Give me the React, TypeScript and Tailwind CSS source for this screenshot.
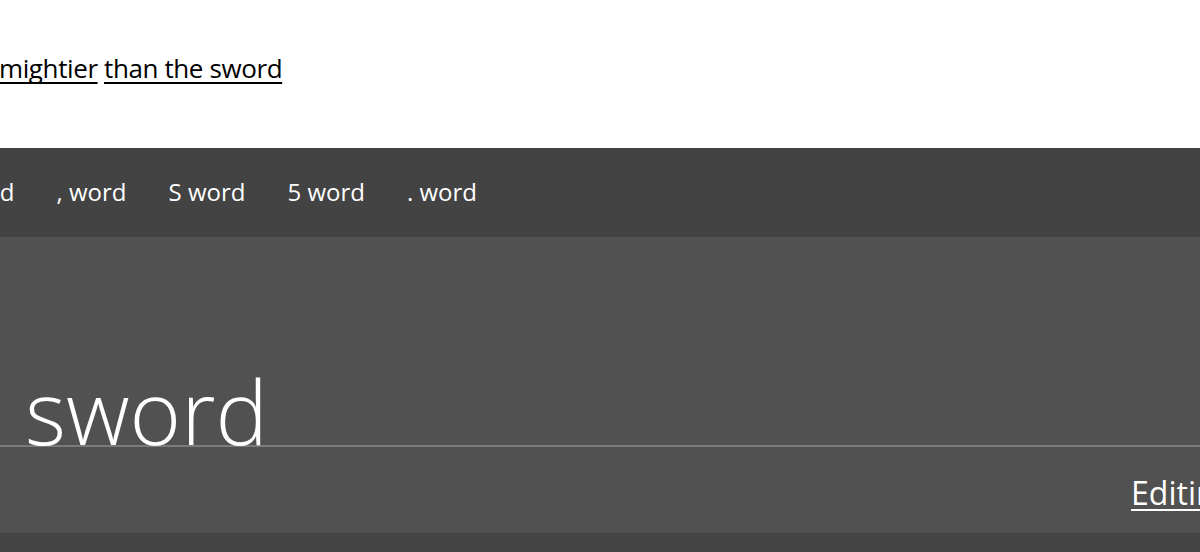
export default function App() {
  const chips = [", word", "S word", "5 word", ". word"];

  return (
    <div className="w-[1200px] h-[552px] overflow-hidden bg-white flex flex-col">
      {/* Sentence line */}
      <div className="h-[148px] overflow-hidden pt-[52px]">
        <p className="ml-[-1px] text-[26px] leading-[32px] text-black whitespace-nowrap font-['Open_Sans',sans-serif] tracking-[-0.015em]">
          <span className="underline underline-offset-[4px] decoration-[2px] [text-decoration-skip-ink:none]">mightier</span>{" "}
          <span className="underline underline-offset-[4px] decoration-[2px] [text-decoration-skip-ink:none]">than the sword</span>
        </p>
      </div>

      {/* Suggestion bar */}
      <div className="h-[89px] bg-[#434343] flex items-center overflow-hidden font-['Open_Sans',sans-serif] text-[24px] text-white whitespace-nowrap">
        <span className="ml-[-43px] -translate-y-[1px]">word</span>
        {chips.map((c) => (
          <span key={c} className="ml-[42px] -translate-y-[1px]">
            {c}
          </span>
        ))}
      </div>

      {/* Editing panel */}
      <div className="h-[296px] bg-[#515151] flex flex-col overflow-hidden">
        <div className="h-[210px] flex items-end border-b-2 border-[#7b7b7b]">
          <span className="ml-[25px] text-[88px] leading-[88px] font-light text-white font-['Open_Sans',sans-serif] translate-y-[10px]">
            sword
          </span>
        </div>
        <div className="flex justify-end pt-[26px] overflow-hidden">
          <span className="mr-[-33px] text-[32px] leading-[40px] text-white underline decoration-[2px] underline-offset-[4px] font-['Open_Sans',sans-serif] whitespace-nowrap">
            Editing
          </span>
        </div>
      </div>

      <div className="flex-1 bg-[#444444]" />
    </div>
  );
}
